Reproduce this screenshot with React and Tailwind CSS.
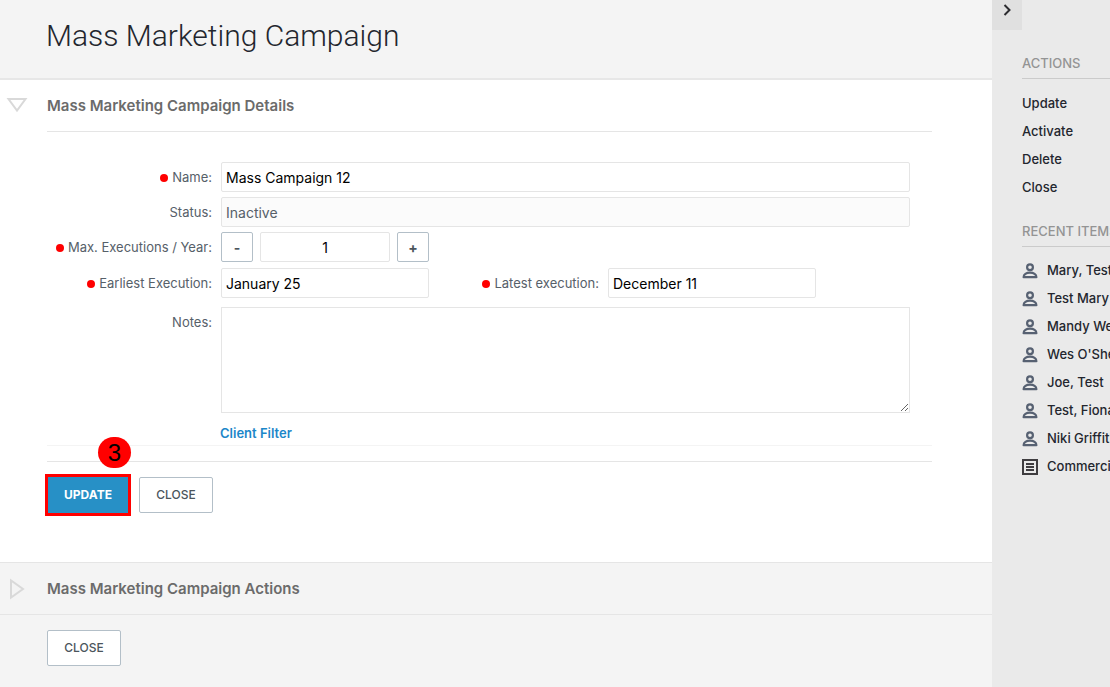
import React, { useState } from 'react';

const actions = ['Update', 'Activate', 'Delete', 'Close'];

const recentItems = [
  { type: 'contact', name: 'Mary, Test' },
  { type: 'contact', name: 'Test Mary' },
  { type: 'contact', name: 'Mandy Wells' },
  { type: 'contact', name: "Wes O'Shea" },
  { type: 'contact', name: 'Joe, Test' },
  { type: 'contact', name: 'Test, Fiona' },
  { type: 'contact', name: 'Niki Griffith' },
  { type: 'policy', name: 'Commercial' },
];

const ContactIcon = () => (
  <svg width="16" height="16" viewBox="0 0 16 16" fill="none" stroke="#576172" strokeWidth="2.2" className="shrink-0">
    <circle cx="8" cy="4.2" r="2.9" />
    <path d="M1.600 14.200c0-2.800 2.700-4.600 6.400-4.600s6.400 1.800 6.400 4.600z" strokeLinejoin="round" />
  </svg>
);

const PolicyIcon = () => (
  <svg width="16" height="16" viewBox="0 0 16 16" fill="none" stroke="#3f3d40" strokeWidth="2" className="shrink-0">
    <rect x="1" y="1" width="14" height="14" />
    <path d="M4 5h8M4 8h8M4 11h8" strokeWidth="1.8" />
  </svg>
);

const Label = ({ htmlFor, required, className, children }) => (
  <label
    htmlFor={htmlFor}
    className={`flex h-[30px] shrink-0 items-center justify-end gap-1 whitespace-nowrap pt-0.5 text-[13px] text-[#566069] ${className}`}
  >
    {required && <span className="size-2 rounded-full bg-[#f00]" />}
    {children}
  </label>
);

const inputStyle = 'h-[30px] rounded-xs border border-[#e5e5e5] px-1 text-[14px] outline-none';

const OutlineButton = ({ children }) => (
  <button
    type="button"
    className="h-9 w-[74px] rounded-xs border border-[#b3bfc8] bg-white text-[12px] font-medium text-[#4b555c]"
  >
    {children}
  </button>
);

const StepButton = ({ label, onClick, children }) => (
  <button
    type="button"
    aria-label={label}
    onClick={onClick}
    className="h-[30px] w-8 rounded-xs border border-[#b3bfc8] bg-white text-[14px] font-bold text-[#4b555c]"
  >
    {children}
  </button>
);

const SectionHeader = ({ open, onToggle, children }) => (
  <h2 className="flex h-[51px] items-center text-[15px] font-semibold text-[#6b6b6b]">
    <button type="button" aria-label="Toggle section" onClick={onToggle} className="flex w-[47px] shrink-0 pl-[6px]">
      <svg width="22" height="22" viewBox="0 0 22 22" fill="none" stroke="#d9d9d9" strokeWidth="2">
        {open ? <path d="M2.500 4h17L11 15.500z" /> : <path d="M5 2.500v17L17 11z" />}
      </svg>
    </button>
    <span className="pt-px">{children}</span>
  </h2>
);

const App = () => {
  const [name, setName] = useState('Mass Campaign 12');
  const [executions, setExecutions] = useState(1);
  const [earliest, setEarliest] = useState('January 25');
  const [latest, setLatest] = useState('December 11');
  const [notes, setNotes] = useState('');
  const [detailsOpen, setDetailsOpen] = useState(true);
  const [actionsOpen, setActionsOpen] = useState(false);

  return (
    <div className="flex min-h-screen bg-[#f4f4f4] font-[Inter,sans-serif] text-black">
      <main className="min-w-0 flex-1">
        <header className="flex h-20 items-center border-b-2 border-[#e7e7e7] pb-[6px] pl-[46px]">
          <h1 className="font-[Roboto,sans-serif] text-[30px] leading-10 font-light text-[#23262e]">
            Mass Marketing Campaign
          </h1>
        </header>

        <section className="bg-white pb-[49px]">
          <SectionHeader open={detailsOpen} onToggle={() => setDetailsOpen(!detailsOpen)}>
            Mass Marketing Campaign Details
          </SectionHeader>

          {detailsOpen && (
            <form className="mr-[60px] ml-[47px]" onSubmit={(e) => e.preventDefault()}>
              <div className="flex flex-col gap-[5px] border-t border-b border-t-[#e5e5e5] border-b-[#f4f4f4] pt-[30px] pr-[22px] pb-0.5">
                <div className="flex gap-[9px]">
                  <Label htmlFor="name" required className="w-[165px]">Name:</Label>
                  <input
                    id="name"
                    type="text"
                    value={name}
                    onChange={(e) => setName(e.target.value)}
                    className={`${inputStyle} min-w-0 flex-1`}
                  />
                </div>

                <div className="flex gap-[9px]">
                  <Label htmlFor="status" className="w-[165px]">Status:</Label>
                  <input
                    id="status"
                    type="text"
                    value="Inactive"
                    readOnly
                    className={`${inputStyle} min-w-0 flex-1 bg-[#fbfbfb] text-[#566069]`}
                  />
                </div>

                <div className="flex gap-[9px]">
                  <Label htmlFor="executions" required className="w-[165px]">Max. Executions / Year:</Label>
                  <div className="flex gap-[7px]">
                    <StepButton label="Decrease" onClick={() => setExecutions(executions - 1)}>-</StepButton>
                    <input
                      id="executions"
                      type="text"
                      value={executions}
                      onChange={(e) => setExecutions(Number(e.target.value) || 0)}
                      className={`${inputStyle} w-[130px] text-center`}
                    />
                    <StepButton label="Increase" onClick={() => setExecutions(executions + 1)}>+</StepButton>
                  </div>
                </div>

                <div className="flex gap-[9px] pt-px">
                  <Label htmlFor="earliest" required className="w-[165px]">Earliest Execution:</Label>
                  <input
                    id="earliest"
                    type="text"
                    value={earliest}
                    onChange={(e) => setEarliest(e.target.value)}
                    className={`${inputStyle} w-52`}
                  />
                  <Label htmlFor="latest" required className="w-[161px]">Latest execution:</Label>
                  <input
                    id="latest"
                    type="text"
                    value={latest}
                    onChange={(e) => setLatest(e.target.value)}
                    className={`${inputStyle} w-52`}
                  />
                </div>

                <div className="flex gap-[9px] pt-1">
                  <Label htmlFor="notes" className="w-[165px]">Notes:</Label>
                  <textarea
                    id="notes"
                    value={notes}
                    onChange={(e) => setNotes(e.target.value)}
                    className="h-[106px] min-w-0 flex-1 resize border border-[#e5e5e5] px-1 text-[14px] outline-none"
                  />
                </div>

                <a href="#filter" className="ml-[173px] self-start pt-[5px] text-[13px] leading-5 font-semibold text-[#1c87c9]">
                  Client Filter
                </a>
              </div>

              <div className="mt-[15px] flex gap-[10px] border-t border-[#e5e5e5] pt-[15px]">
                <div className="relative">
                  <button type="submit" className="h-9 w-[82px] bg-[#2790c6] text-[12px] font-bold text-white">
                    UPDATE
                  </button>
                  <span className="pointer-events-none absolute -inset-x-0.5 -inset-y-[3px] border-3 border-[#f00]" />
                  <span className="absolute -top-10 left-[51px] flex h-[31px] w-[33px] items-center justify-center rounded-full bg-[#f00] font-['Liberation_Sans',sans-serif] text-[24px] text-black">
                    3
                  </span>
                </div>
                <OutlineButton>CLOSE</OutlineButton>
              </div>
            </form>
          )}
        </section>

        <section className="border-t border-b border-[#e5e5e5]">
          <SectionHeader open={actionsOpen} onToggle={() => setActionsOpen(!actionsOpen)}>
            Mass Marketing Campaign Actions
          </SectionHeader>
        </section>

        <footer className="px-[47px] pt-[15px]">
          <OutlineButton>CLOSE</OutlineButton>
        </footer>
      </main>

      <aside className="w-[118px] shrink-0 overflow-hidden bg-[#eaeaea] text-[13px] font-medium whitespace-nowrap text-[#23262e]">
        <button type="button" aria-label="Collapse panel" className="flex h-[30px] w-[30px] items-start justify-center bg-[#e0e0e0] pt-1">
          <svg width="12" height="12" viewBox="0 0 12 12" fill="none" stroke="#2b2b2f" strokeWidth="2">
            <path d="M3.500 1l5 5-5 5" />
          </svg>
        </button>

        <nav className="pt-[21px] pl-[30px]">
          <h3 className="h-7 border-b border-[#cbcbcb] leading-6 text-[#949494]">ACTIONS</h3>
          <ul className="pt-[10px]">
            {actions.map((action) => (
              <li key={action} className="h-7 leading-7">
                <a href={`#${action.toLowerCase()}`}>{action}</a>
              </li>
            ))}
          </ul>

          <h3 className="mt-[18px] h-7 border-b border-[#cbcbcb] leading-6 text-[#949494]">RECENT ITEMS</h3>
          <ul className="pt-[10px]">
            {recentItems.map((item) => (
              <li key={item.name} className="h-7">
                <a href="#recent" className="flex h-7 items-center gap-[9px]">
                  {item.type === 'contact' ? <ContactIcon /> : <PolicyIcon />}
                  {item.name}
                </a>
              </li>
            ))}
          </ul>
        </nav>
      </aside>
    </div>
  );
};

export default App;
